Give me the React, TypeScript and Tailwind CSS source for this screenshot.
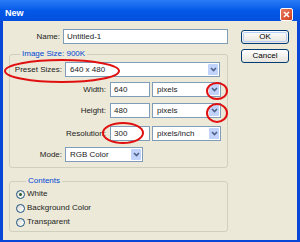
import React from "react";

// XP-style "New" document dialog

function Chevron() {
  return (
    <svg width="7" height="5" viewBox="0 0 7 5">
      <path d="M1 1 L3.5 3.5 L6 1" fill="none" stroke="#4d6185" strokeWidth="1.6" />
    </svg>
  );
}

function Select({ value, className }: { value: string; className: string }) {
  return (
    <div
      className={`flex h-[15px] items-center border border-[#7f9db9] bg-white pl-[4px] ${className}`}
    >
      <span className="flex-1 leading-none">{value}</span>
      <div className="m-[1px] flex h-[11px] w-[10px] items-center justify-center rounded-[1px] bg-[#c1d3fb]">
        <Chevron />
      </div>
    </div>
  );
}

function Input({ value, className }: { value: string; className: string }) {
  return (
    <div
      className={`flex h-[15px] items-center border border-[#7f9db9] bg-white pl-[3px] leading-none ${className}`}
    >
      {value}
    </div>
  );
}

function Button({ label, def }: { label: string; def?: boolean }) {
  return (
    <div className="h-[14px] w-[48px] rounded-[3px] border border-[#003c74] bg-gradient-to-b from-white to-[#e6e4dc] p-[1px]">
      <div
        className={`flex h-full w-full items-center justify-center rounded-[2px] leading-none text-black ${
          def ? "border border-[#b8d0f8]" : ""
        }`}
      >
        {label}
      </div>
    </div>
  );
}

function Radio({ label, checked }: { label: string; checked?: boolean }) {
  return (
    <div className="flex h-[14px] items-center gap-[2px]">
      <div className="flex h-[9px] w-[9px] items-center justify-center rounded-full border border-[#1c5180] bg-gradient-to-br from-[#dcdcd4] to-white">
        {checked && <div className="h-[3px] w-[3px] rounded-full bg-[#2f5a2f]" />}
      </div>
      <span className="leading-none">{label}</span>
    </div>
  );
}

export default function App() {
  return (
    <div
      className="relative h-[242px] w-[300px] overflow-hidden bg-[#0846d8] text-[8px] text-[#222]"
      style={{ fontFamily: '"Liberation Sans", Arial, sans-serif' }}
    >
      {/* title bar */}
      <div className="flex h-[21px] items-center justify-between bg-gradient-to-b from-[#2a7cf6] via-[#0458e8] to-[#0450de] pl-[5px] pr-[7px] pt-[6px]">
        <span className="text-[9px] font-bold leading-none text-white">New</span>
        <div className="mt-[1px] flex h-[13px] w-[13px] items-center justify-center rounded-[2px] border border-white bg-gradient-to-br from-[#e87a5e] to-[#d23c1a]">
          <svg width="7" height="7" viewBox="0 0 7 7">
            <path d="M1 1 L6 6 M6 1 L1 6" stroke="white" strokeWidth="1.5" />
          </svg>
        </div>
      </div>

      {/* body */}
      <div className="mx-[3px] flex h-[219px] bg-[#ece9d8]">
        <div className="ml-[6px] w-[219px] pt-[8px]">
          <div className="flex items-center gap-[3px]">
            <span className="w-[53px] text-right">Name:</span>
            <Input value="Untitled-1" className="w-[165px] shrink-0" />
          </div>

          <fieldset className="mt-[5px] h-[119px] rounded-[3px] border border-[#d0d0bf]">
            <legend className="ml-[10px] px-[2px] leading-[10px] text-[#0046d5]">Image Size: 900K</legend>
            <div className="mt-[3px] flex flex-col">
              <div className="flex items-center gap-[3px]">
                <span className="w-[52px] text-right">Preset Sizes:</span>
                <Select value="640 x 480" className="w-[155px]" />
              </div>
              <div className="mt-[5px] flex items-center">
                <span className="w-[96px] text-right">Width:</span>
                <Input value="640" className="ml-[4px] w-[40px]" />
                <Select value="pixels" className="ml-[2px] w-[69px]" />
              </div>
              <div className="mt-[6px] flex items-center">
                <span className="w-[96px] text-right">Height:</span>
                <Input value="480" className="ml-[4px] w-[40px]" />
                <Select value="pixels" className="ml-[2px] w-[69px]" />
              </div>
              <div className="mt-[8px] flex items-center">
                <span className="w-[96px] text-right">Resolution:</span>
                <Input value="300" className="ml-[4px] w-[40px]" />
                <Select value="pixels/inch" className="ml-[2px] w-[69px]" />
              </div>
              <div className="mt-[6px] flex items-center gap-[3px]">
                <span className="w-[52px] text-right">Mode:</span>
                <Select value="RGB Color" className="w-[78px]" />
              </div>
            </div>
          </fieldset>

          <fieldset className="mt-[8px] h-[56px] rounded-[3px] border border-[#d0d0bf] pl-[6px]">
            <legend className="ml-[10px] px-[2px] leading-[10px] text-[#0046d5]">Contents</legend>
            <div className="mt-[1px] flex flex-col">
              <Radio label="White" checked />
              <Radio label="Background Color" />
              <Radio label="Transparent" />
            </div>
          </fieldset>
        </div>

        <div className="ml-[13px] flex flex-col gap-[5px] pt-[9px]">
          <Button label="OK" def />
          <Button label="Cancel" />
        </div>
      </div>

      {/* red annotation marks */}
      <svg className="pointer-events-none absolute left-0 top-0" width="300" height="242">
        <g fill="none" stroke="#e01010" strokeWidth="2">
          <ellipse cx="62" cy="71" rx="57" ry="11" />
          <ellipse cx="217" cy="91" rx="10" ry="8" />
          <ellipse cx="217" cy="113" rx="10" ry="9" />
          <ellipse cx="123" cy="133" rx="20" ry="10" />
        </g>
      </svg>
    </div>
  );
}
